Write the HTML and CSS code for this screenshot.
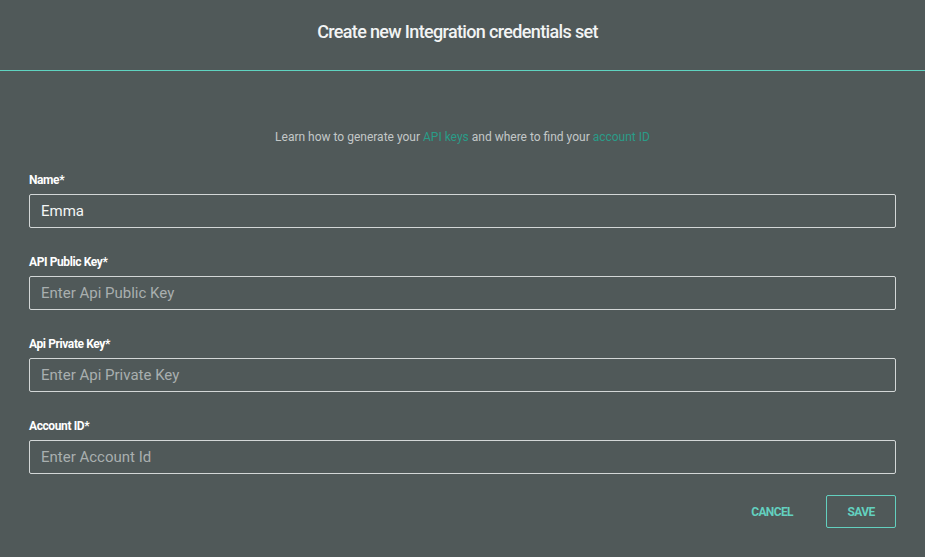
FILE: index.html
```html
<!DOCTYPE html>
<html>
<head>
<meta charset="utf-8">
<link rel="stylesheet" href="styles.css">
</head>
<body>
<div class="dialog">
  <header class="dialog-header">
    <h1 class="dialog-title">Create new Integration credentials set</h1>
  </header>
  <form class="dialog-body">
    <p class="help">Learn how to generate your <a href="#">API keys</a> and where to find your <a href="#">account ID</a></p>
    <div class="fields">
      <div class="field">
        <label class="label">Name*</label>
        <input class="input" type="text" value="Emma">
      </div>
      <div class="field">
        <label class="label">API Public Key*</label>
        <input class="input" type="text" placeholder="Enter Api Public Key">
      </div>
      <div class="field">
        <label class="label">Api Private Key*</label>
        <input class="input" type="text" placeholder="Enter Api Private Key">
      </div>
      <div class="field">
        <label class="label">Account ID*</label>
        <input class="input" type="text" placeholder="Enter Account Id">
      </div>
    </div>
    <div class="actions">
      <button type="button" class="btn btn-text">CANCEL</button>
      <button type="button" class="btn btn-outline">SAVE</button>
    </div>
  </form>
</div>
</body>
</html>
```
FILE: styles.css
```css
html, body {
  margin: 0;
  padding: 0;
  background: #505959;
  font-family: Roboto, "Liberation Sans", sans-serif;
}
.dialog {
  width: 925px;
  height: 557px;
  background: #505959;
}
.dialog-header {
  height: 70px;
  border-bottom: 1px solid #5fd3c0;
  display: flex;
  align-items: center;
  justify-content: center;
  padding-right: 10px;
}
.dialog-title {
  margin: 0 0 8px 0;
  font-size: 18px;
  font-weight: 500;
  letter-spacing: -0.65px;
  color: #f2f4f4;
}
.dialog-body {
  padding: 58px 29px 0 29px;
  display: flex;
  flex-direction: column;
}
.help {
  margin: 0 0 27px 0;
  text-align: center;
  font-size: 12px;
  line-height: 16px;
  color: #c3c8c8;
}
.help a {
  color: #2a9c88;
  text-decoration: none;
}
.fields {
  display: flex;
  flex-direction: column;
  gap: 26px;
}
.field {
  display: flex;
  flex-direction: column;
  gap: 6px;
}
.label {
  font-size: 12px;
  line-height: 16px;
  font-weight: 700;
  letter-spacing: -0.4px;
  color: #ffffff;
}
.input {
  box-sizing: border-box;
  height: 34px;
  width: 100%;
  margin: 0;
  padding: 0 11px;
  border: 1px solid #d3d7d7;
  border-radius: 2px;
  background: transparent;
  font-family: Roboto, "Liberation Sans", sans-serif;
  font-size: 15px;
  color: #f4f6f6;
  outline: none;
}
.input::placeholder {
  color: #a9afaf;
}
.actions {
  display: flex;
  justify-content: flex-end;
  align-items: center;
  gap: 17px;
  margin-top: 21px;
}
.btn {
  font-family: Roboto, "Liberation Sans", sans-serif;
  font-size: 12px;
  font-weight: 700;
  letter-spacing: -0.6px;
  color: #63d0bf;
  background: transparent;
  cursor: pointer;
  height: 32px;
  box-sizing: border-box;
}
.btn-text {
  border: none;
  padding: 0 16px;
}
.btn-outline {
  width: 70px;
  height: 33px;
  border: 1px solid #63d0bf;
  border-radius: 2px;
  padding: 0;
}
```
